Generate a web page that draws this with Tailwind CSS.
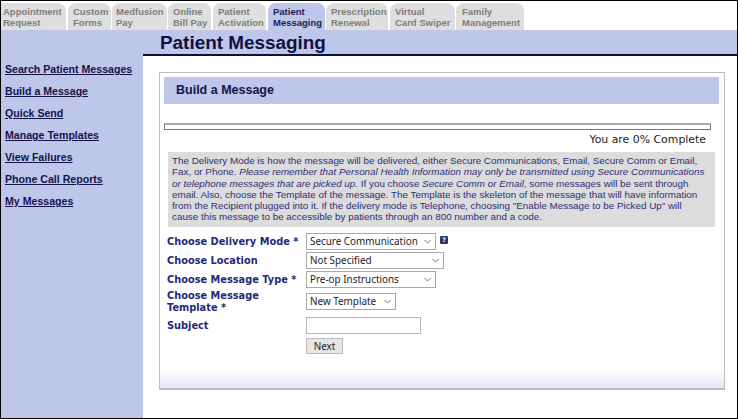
<!DOCTYPE html>
<html lang="en">
<head>
  <meta charset="UTF-8">
  <script src="https://cdn.jsdelivr.net/npm/@tailwindcss/browser@4"></script>
  <title>Patient Messaging</title>
</head>
<body class="bg-white">
  <div class="w-[738px] h-[419px] border border-black overflow-hidden flex flex-col bg-white font-['Liberation_Sans',sans-serif]">

    <!-- tabs -->
    <nav class="h-[29px] pt-[2px] flex items-end text-[9.5px] leading-[11px] font-bold text-[#7d7d7d] shrink-0">
      <a class="w-[65px] h-[27px] pl-[2px] pt-[3px] bg-[#dfdfdf] rounded-tr-[8px]">Appointment<br>Request</a>
      <a class="w-[43px] h-[27px] ml-[2px] pl-[5px] pt-[3px] bg-[#dfdfdf] rounded-t-[8px]">Custom<br>Forms</a>
      <a class="w-[55px] h-[27px] ml-[1px] pl-[4px] pt-[3px] bg-[#dfdfdf] rounded-t-[8px]">Medfusion<br>Pay</a>
      <a class="w-[43px] h-[27px] ml-[1px] pl-[5px] pt-[3px] bg-[#dfdfdf] rounded-t-[8px]">Online<br>Bill Pay</a>
      <a class="w-[53px] h-[27px] ml-[2px] pl-[5px] pt-[3px] bg-[#dfdfdf] rounded-t-[8px]">Patient<br>Activation</a>
      <a class="w-[57px] h-[27px] ml-[2px] pl-[5px] pt-[3px] bg-[#bec6ea] rounded-t-[8px] text-[#1c1c50]">Patient<br>Messaging</a>
      <a class="w-[62px] h-[27px] ml-[1px] pl-[5px] pt-[3px] bg-[#dfdfdf] rounded-t-[8px]">Prescription<br>Renewal</a>
      <a class="w-[65px] h-[27px] ml-[2px] pl-[5px] pt-[3px] bg-[#dfdfdf] rounded-t-[8px]">Virtual<br>Card Swiper</a>
      <a class="w-[68px] h-[27px] ml-[1px] pl-[6px] pt-[3px] bg-[#dfdfdf] rounded-t-[8px]">Family<br>Management</a>
    </nav>

    <div class="flex flex-1 min-h-0">
      <!-- sidebar -->
      <aside class="w-[142px] shrink-0 bg-[#bec6ea] pt-[32px] pl-[4px]">
        <ul class="flex flex-col gap-[8px] text-[10.6px] leading-[14px] font-bold text-[#14144a] underline">
          <li>Search Patient Messages</li>
          <li>Build a Message</li>
          <li>Quick Send</li>
          <li>Manage Templates</li>
          <li>View Failures</li>
          <li>Phone Call Reports</li>
          <li>My Messages</li>
        </ul>
      </aside>

      <main class="flex-1 min-w-0 flex flex-col">
        <!-- title band, overlaps the sidebar colour -->
        <div class="h-[26px] bg-[#bec6ea] border-b-2 border-[#0f1040] pl-[17px] shrink-0">
          <h1 class="text-[18.9px] leading-[25px] font-bold text-[#0f1040]">Patient Messaging</h1>
        </div>

        <!-- card -->
        <section class="mt-[16px] ml-[16px] w-[566px] h-[318px] border border-[#bdbdbd] border-b-2 p-[4px] bg-gradient-to-b from-white from-[94%] to-[#e6e8f4]">
          <div class="h-[27px] w-[555px] bg-[#bec6ea] pl-[12px]">
            <h2 class="text-[12.5px] leading-[27px] font-bold text-[#14144a]">Build a Message</h2>
          </div>

          <div class="mt-[19px] w-[547px] h-[7px] border border-t-2 border-[#777] border-t-[#aaa]"></div>
          <p class="mt-[3px] w-[542px] text-right font-['DejaVu_Sans',sans-serif] text-[10.9px] leading-[14px] text-[#222]">You are 0% Complete</p>

          <div class="mt-[5px] ml-[4px] w-[547px] h-[75px] bg-[#dcdcdc] pl-[4px] pr-[8px] pt-[3px] text-[9.85px] leading-[11.3px] text-[#2e2e78]">
            The Delivery Mode is how the message will be delivered, either Secure Communications, Email, Secure Comm or Email, Fax, or Phone. <i>Please remember that Personal Health Information may only be transmitted using Secure Communications or telephone messages that are picked up.</i> If you choose <i>Secure Comm or Email</i>, some messages will be sent through email. Also, choose the Template of the message. The Template is the skeleton of the message that will have information from the Recipient plugged into it. If the delivery mode is Telephone, choosing "Enable Message to be Picked Up" will cause this message to be accessible by patients through an 800 number and a code.
          </div>

          <form class="mt-[6px] ml-[3px] grid grid-cols-[139px_1fr] items-center gap-y-[2px] font-['DejaVu_Sans',sans-serif] text-[9.8px] leading-[11.5px] font-bold text-[#1f2a78]">
            <label class="h-[17px] leading-[17px]">Choose Delivery Mode *</label>
            <div class="flex items-center gap-[4px] h-[17px]">
              <div class="relative w-[130px] h-[17px]">
                <select class="w-full h-full appearance-none border border-[#a9a9a9] bg-white pl-[3px] pr-[12px] pb-[1px] font-['Noto_Sans',sans-serif] text-[9.9px] leading-[14px] font-normal text-[#222]"><option>Secure Communication</option></select>
                <svg class="absolute right-[5px] top-[6px]" width="7" height="5" viewBox="0 0 7 5" fill="none" stroke="#777"><path d="M.5 1l3 3 3-3"/></svg>
              </div>
              <span class="w-[8px] h-[8px] mb-[3px] bg-[#2c3a63] text-white text-[6px] leading-[8px] text-center rounded-[1px]">?</span>
            </div>

            <label class="h-[17px] leading-[17px]">Choose Location</label>
            <div class="relative w-[138px] h-[17px]">
              <select class="w-full h-full appearance-none border border-[#a9a9a9] bg-white pl-[3px] pr-[12px] pb-[1px] font-['Noto_Sans',sans-serif] text-[9.9px] leading-[14px] font-normal text-[#222]"><option>Not Specified</option></select>
              <svg class="absolute right-[5px] top-[6px]" width="7" height="5" viewBox="0 0 7 5" fill="none" stroke="#777"><path d="M.5 1l3 3 3-3"/></svg>
            </div>

            <label class="h-[17px] leading-[17px]">Choose Message Type *</label>
            <div class="relative w-[130px] h-[17px]">
              <select class="w-full h-full appearance-none border border-[#a9a9a9] bg-white pl-[3px] pr-[12px] pb-[1px] font-['Noto_Sans',sans-serif] text-[9.9px] leading-[14px] font-normal text-[#222]"><option>Pre-op Instructions</option></select>
              <svg class="absolute right-[5px] top-[6px]" width="7" height="5" viewBox="0 0 7 5" fill="none" stroke="#777"><path d="M.5 1l3 3 3-3"/></svg>
            </div>

            <label class="w-[120px]">Choose Message Template *</label>
            <div class="relative w-[90px] h-[17px]">
              <select class="w-full h-full appearance-none border border-[#a9a9a9] bg-white pl-[3px] pr-[12px] pb-[1px] font-['Noto_Sans',sans-serif] text-[9.9px] leading-[14px] font-normal text-[#222]"><option>New Template</option></select>
              <svg class="absolute right-[5px] top-[6px]" width="7" height="5" viewBox="0 0 7 5" fill="none" stroke="#777"><path d="M.5 1l3 3 3-3"/></svg>
            </div>

            <label class="h-[17px] leading-[17px] mt-[2px]">Subject</label>
            <input type="text" class="mt-[2px] w-[115px] h-[17px] border border-[#b5b5b5] bg-white">

            <span></span>
            <button type="button" class="mt-[2px] w-[37px] h-[16px] border border-[#bcbcbc] bg-[#e6e6e6] font-['Noto_Sans',sans-serif] text-[9.9px] leading-[14px] font-normal text-[#222]">Next</button>
          </form>
        </section>
      </main>
    </div>
  </div>
</body>
</html>
